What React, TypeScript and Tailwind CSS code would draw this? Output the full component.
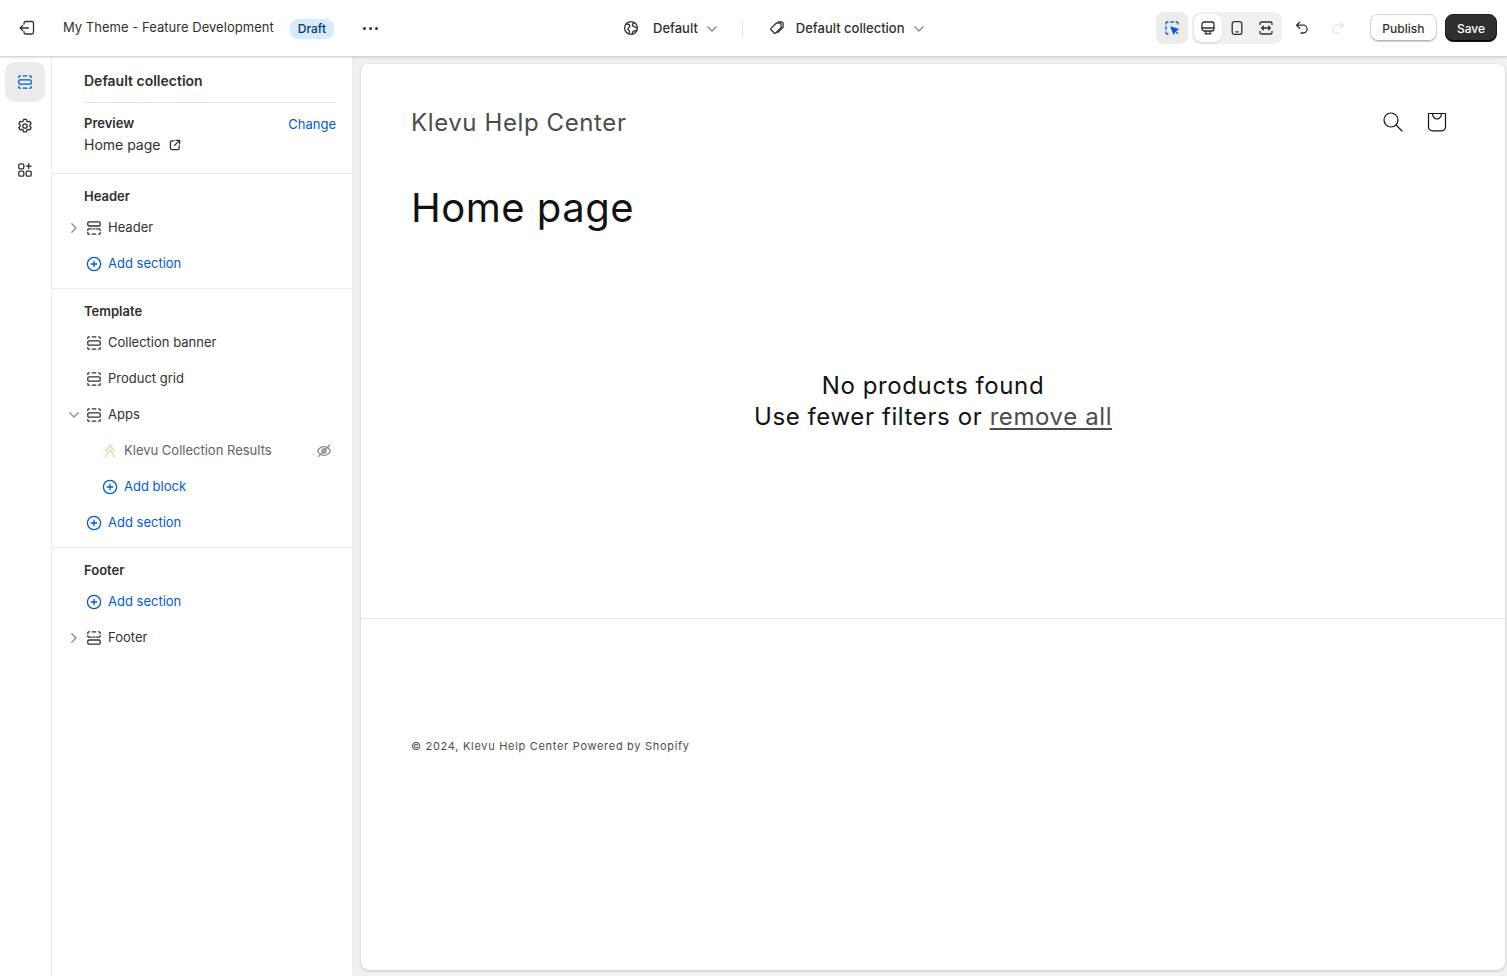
import React from "react";

type IP = { className?: string };
const S = ({ className, children, size = 16, vb = "0 0 16 16" }: IP & { children: React.ReactNode; size?: number; vb?: string }) => (
  <svg width={size} height={size} viewBox={vb} fill="none" stroke="currentColor" strokeWidth={1.3} strokeLinecap="round" strokeLinejoin="round" className={className}>
    {children}
  </svg>
);

const SectionIcon = ({ className }: IP) => (
  <S className={className}>
    <rect x="1.800" y="5.800" width="12.400" height="4.400" rx="1.200" />
    <path d="M1.800 3.400V2.800a1 1 0 0 1 1-1h.6M6.200 1.800h3.600M12.600 1.800h.6a1 1 0 0 1 1 1v.6M1.800 12.600v.6a1 1 0 0 0 1 1h.6M6.200 14.200h3.600M12.600 14.200h.6a1 1 0 0 0 1-1v-.6" />
  </S>
);
const HeaderIcon = ({ className }: IP) => (
  <S className={className}>
    <rect x="1.800" y="1.800" width="12.400" height="4.200" rx="1.200" />
    <path d="M5.400 8.800H3a1.200 1.200 0 0 0-1.200 1.200v.4M7 8.800h2M10.600 8.800H13a1.200 1.200 0 0 1 1.200 1.200v.4M1.800 12.400v.8a1 1 0 0 0 1 1h.6M6.200 14.200h3.600M12.600 14.200h.6a1 1 0 0 0 1-1v-.8" />
  </S>
);
const FooterIcon = ({ className }: IP) => (
  <S className={className}>
    <rect x="1.800" y="10" width="12.400" height="4.200" rx="1.200" />
    <path d="M5.400 7.200H3A1.200 1.200 0 0 1 1.800 6v-.4M7 7.200h2M10.600 7.200H13A1.200 1.200 0 0 0 14.200 6v-.4M1.800 3.600v-.8a1 1 0 0 1 1-1h.6M6.200 1.800h3.600M12.600 1.800h.6a1 1 0 0 1 1 1v.8" />
  </S>
);
const Plus = ({ className }: IP) => (
  <S className={className}>
    <circle cx="8" cy="8" r="6.600" />
    <path d="M8 5.200v5.600M5.200 8h5.600" />
  </S>
);
const Chevron = ({ className }: IP) => (
  <S size={12} vb="0 0 12 12" className={className}>
    <path d="M1.800 3.800 6 8l4.200-4.200" />
  </S>
);
const ChevronRight = ({ className }: IP) => (
  <S size={12} vb="0 0 12 12" className={className}>
    <path d="M3.800 1.800 8 6l-4.200 4.200" />
  </S>
);

const Add = ({ label, indent }: { label: string; indent?: boolean }) => (
  <div className={`flex h-9 items-center gap-[6px] text-[13px] font-normal text-[#005bd3] ${indent ? "pl-[50px]" : "pl-[34px]"}`}>
    <Plus className="-mt-[1px]" />
    <span>{label}</span>
  </div>
);

const Row = ({ icon, label, lead }: { icon: React.ReactNode; label: string; lead?: React.ReactNode }) => (
  <div className="flex h-9 items-center text-[13px] font-normal text-[#303030]">
    <span className="flex w-[34px] items-center justify-end pr-[6px] text-[#8a8a8a]">{lead}</span>
    <span className="text-[#303030]">{icon}</span>
    <span className="ml-[6px]">{label}</span>
  </div>
);

const Heading = ({ children }: { children: React.ReactNode }) => (
  <div className="flex h-[26px] items-center pl-[32px] text-[13px] font-semibold text-[#303030]">{children}</div>
);

const ToolButton = ({ children, active }: { children: React.ReactNode; active?: boolean }) => (
  <div className={`flex h-7 w-7 items-center justify-center rounded-lg text-[#303030] ${active ? "bg-white shadow-sm" : ""}`}>{children}</div>
);

function TopBar() {
  return (
    <header className="relative z-10 flex h-[57px] shrink-0 items-center justify-between border-b border-[#d4d4d4] bg-white shadow-[0_1px_2px_rgba(0,0,0,0.1)]">
      <div className="flex w-[390px] items-center">
        <span className="flex w-[54px] justify-center text-[#303030]">
          <S size={18} vb="0 0 18 18">
            <path d="M6 5V4.200A1.700 1.700 0 0 1 7.700 2.500h6.100a1.700 1.700 0 0 1 1.700 1.700v9.100a1.700 1.700 0 0 1-1.700 1.700H7.700A1.700 1.700 0 0 1 6 13.300v-.8M10.500 9H2.200M4.800 6.400 2.200 9l2.600 2.600" />
          </S>
        </span>
        <span className="ml-[9px] text-[13px] font-normal tracking-[0.03px] text-[#303030]">My Theme - Feature Development</span>
        <span className="ml-[16px] mt-[1px] flex h-5 items-center rounded-lg bg-[#d5ebff] px-2 text-xs font-[450] text-[#003a5a]">Draft</span>
        <span className="ml-[29px] flex items-center gap-[3px]">
          <span className="h-[3px] w-[3px] rounded-full bg-[#303030]" />
          <span className="h-[3px] w-[3px] rounded-full bg-[#303030]" />
          <span className="h-[3px] w-[3px] rounded-full bg-[#303030]" />
        </span>
      </div>
      <div className="absolute left-[623px] flex items-center pt-[1px] text-[13px] font-medium text-[#303030]">
        <S className="-mt-[1px]">
          <circle cx="8" cy="8" r="6.400" />
          <path d="M3.200 4c2 0 3.600.6 3.600 2.200 0 1.400-2 1.200-2 2.700 0 1.300 1.800 1.200 1.800 2.600 0 .8-.4 1.600-.8 2.200M11.200 2.600C10 3.400 9 4.400 9.400 5.600c.4 1.200 2 .8 2.800 1.400.8.600 1.600 1.200 2.200 1.200M9.400 13.900c-.2-1-.2-2 .8-2.600.8-.5 2 0 3-1" />
        </S>
        <span className="ml-[14px]">Default</span>
        <Chevron className="ml-2 text-[#8a8a8a]" />
        <span className="ml-[24px] h-4 w-px bg-[#e3e3e3]" />
        <S className="ml-[26px] -mt-[1px]">
          <path d="M2 8.400 7.400 3H11a1 1 0 0 1 1 1v3.600L6.600 13a1 1 0 0 1-1.400 0L2 9.800a1 1 0 0 1 0-1.400Z" />
          <path d="M9.200 1.800h2.900a2 2 0 0 1 2 2v3.400L8.700 12.600" />
        </S>
        <span className="ml-[11px]">Default collection</span>
        <Chevron className="ml-2 text-[#8a8a8a]" />
      </div>
      <div className="flex items-center pr-[10px]">
        <div className="flex h-8 w-8 items-center justify-center rounded-lg bg-[#ebebeb] text-[#005bd3]">
          <S>
            <path d="M2 4V3a1 1 0 0 1 1-1h1M7 2h2.400M12 2h1a1 1 0 0 1 1 1v1M2 6.600v2.600M2 12v1a1 1 0 0 0 1 1h1" />
            <path d="M7 7l7 2.400-3 1.200-1.200 3.200Z" fill="currentColor" />
            <path d="m10.800 10.600 2.800 2.800" />
          </S>
        </div>
        <div className="ml-[4px] flex h-8 items-center gap-[1px] rounded-lg bg-[#f1f1f1] p-[2px]">
          <ToolButton active>
            <S>
              <rect x="2" y="2" width="12" height="9" rx="2.200" />
              <path d="M2 8h12M6 11v2.800M10 11v2.800M5 13.800h6" />
            </S>
          </ToolButton>
          <ToolButton>
            <S>
              <rect x="3.200" y="1.600" width="9.600" height="12.800" rx="2.200" />
              <path d="M6.800 11.800h2.400" />
            </S>
          </ToolButton>
          <ToolButton>
            <S>
              <path d="M2 4.600V3.600A1.600 1.600 0 0 1 3.600 2h8.800A1.600 1.600 0 0 1 14 3.600v1M2 11.400v1A1.600 1.600 0 0 0 3.600 14h8.800a1.600 1.600 0 0 0 1.600-1.600v-1M3.600 8h8.800M5.400 6.200 3.600 8l1.800 1.800M10.600 6.200 12.400 8l-1.800 1.800" />
            </S>
          </ToolButton>
        </div>
        <span className="ml-[12px] text-[#303030]">
          <S>
            <path d="M5.600 2.200 2.600 5.200l3 3M2.800 5.200h6.400a3.900 3.900 0 0 1 0 7.800H7" />
          </S>
        </span>
        <span className="ml-[20px] text-[#e3e3e3]">
          <S>
            <path d="m10.400 2.200 3 3-3 3M13.200 5.200H6.800a3.900 3.900 0 0 0 0 7.800H9" />
          </S>
        </span>
        <button className="ml-[24px] flex h-7 items-center rounded-lg border border-[#d4d4d4] bg-white px-[11.5px] pt-[1px] text-xs font-medium text-[#303030] shadow-[inset_0_-1px_0_#b5b5b5]">Publish</button>
        <button className="ml-2 flex h-7 items-center rounded-lg border border-[#1a1a1a] bg-[#303030] px-[11px] pt-[1px] text-xs font-medium text-white shadow-[inset_0_-1px_0_#000]">Save</button>
      </div>
    </header>
  );
}

function Rail() {
  return (
    <nav className="flex w-[52px] shrink-0 flex-col items-start border-r border-[#ebebeb] bg-white pl-[5px] pt-[5px] text-[#303030]">
      <div className="flex h-10 w-10 items-center justify-center rounded-[10px] bg-[#ebebeb] text-[#005bd3]">
        <SectionIcon />
      </div>
      <div className="mt-[2px] flex h-[44px] w-10 items-center justify-center">
        <S>
          <circle cx="8" cy="8" r="2.200" />
          <path d="m6.600 1.400-.4 1.800-1.300.7-1.800-.5L1.800 5.500l1.300 1.300v1.500L1.800 9.700l1.300 2.100 1.800-.5 1.300.8.400 1.800h2.800l.4-1.800 1.300-.8 1.800.5 1.300-2.100-1.300-1.400V6.800l1.300-1.300-1.300-2.100-1.800.5-1.300-.7-.4-1.800Z" />
        </S>
      </div>
      <div className="flex h-[44px] w-10 items-center justify-center">
        <S>
          <rect x="1.800" y="1.800" width="5" height="5" rx="1.300" />
          <rect x="1.800" y="9.200" width="5" height="5" rx="1.300" />
          <rect x="9.200" y="9.200" width="5" height="5" rx="1.300" />
          <path d="M11.700 1.600v5M9.200 4.100h5" />
        </S>
      </div>
    </nav>
  );
}

function Panel() {
  return (
    <aside className="w-[301px] shrink-0 border-r border-[#ebebeb] bg-white">
      <div className="border-b border-[#ebebeb]">
        <div className="ml-8 mr-4 h-[46px] border-b border-[#e3e3e3]">
          <div className="flex h-[47px] items-center text-sm font-semibold text-[#303030]">Default collection</div>
        </div>
        <div className="ml-8 mr-4 flex h-[70px] justify-between pt-[10px]">
          <div>
            <div className="text-[13px] font-semibold leading-5 text-[#303030]">Preview</div>
            <div className="mt-[2px] flex items-center text-sm leading-5 text-[#303030]">
              Home page
              <S size={12} vb="0 0 12 12" className="ml-[9px] -mt-[1px]">
                <path d="M5 1.800H3A1.600 1.600 0 0 0 1.400 3.400v5.600A1.600 1.600 0 0 0 3 10.600h5.600A1.600 1.600 0 0 0 10.200 9V7M7 1.400h3.600V5M10.400 1.600 5.600 6.400" />
              </S>
            </div>
          </div>
          <div className="pt-[1px] text-[13px] font-normal leading-5 text-[#005bd3]">Change</div>
        </div>
      </div>

      <div className="border-b border-[#ebebeb] pt-[10px] pb-[6px]">
        <Heading>Header</Heading>
        <Row icon={<HeaderIcon />} label="Header" lead={<ChevronRight />} />
        <Add label="Add section" />
      </div>

      <div className="border-b border-[#ebebeb] pt-[10px] pb-[6px]">
        <Heading>Template</Heading>
        <Row icon={<SectionIcon />} label="Collection banner" />
        <Row icon={<SectionIcon />} label="Product grid" />
        <Row icon={<SectionIcon />} label="Apps" lead={<Chevron />} />
        <div className="flex h-9 items-center pl-[50px] pr-[20px] text-[13px] font-normal text-[#616161]">
          <svg width="16" height="16" viewBox="0 0 16 16" fill="none" stroke="#c3e39b" strokeWidth="1.200" strokeLinecap="round" strokeLinejoin="round">
            <path d="M3.600 8.200 8 1.800l4.400 6.400M3.200 14 8 6.600l4.800 7.400" />
          </svg>
          <span className="ml-[6px] flex-1 whitespace-nowrap">Klevu Collection Results</span>
          <S className="-mt-[1px] text-[#8a8a8a]">
            <path d="M1.600 8C3 5.200 5.200 3.700 8 3.700s5 1.500 6.400 4.300C13 10.800 10.800 12.300 8 12.300S3 10.800 1.600 8Z" />
            <circle cx="8" cy="8" r="2" />
            <path d="M13.600 2.200 2.600 13.400" />
          </S>
        </div>
        <Add label="Add block" indent />
        <Add label="Add section" />
      </div>

      <div className="pt-[10px]">
        <Heading>Footer</Heading>
        <Add label="Add section" />
        <Row icon={<FooterIcon />} label="Footer" lead={<ChevronRight />} />
      </div>
    </aside>
  );
}

function Preview() {
  return (
    <main className="flex min-w-0 flex-1 bg-[#f1f1f1] pb-[6px] pl-2 pr-[2px] pt-[7px]">
      <div className="flex flex-1 flex-col rounded-lg bg-white text-[#121212] shadow-[0_1px_3px_rgba(0,0,0,0.2)]">
        <div className="flex h-[118px] items-center justify-between pl-[50px] pr-[58px]">
          <span className="text-[24px] leading-[36px] tracking-[0.6px] text-[#4b4b4b]">Klevu Help Center</span>
          <span className="-mt-[2px] flex items-center gap-6 text-[#121212]">
            <svg width="20" height="20" viewBox="0 0 20 20" fill="none" stroke="currentColor" strokeWidth="1.200" strokeLinecap="round">
              <circle cx="8" cy="8" r="7" />
              <path d="m13 13 6 6" />
            </svg>
            <svg width="20" height="20" viewBox="0 0 20 20" fill="none" stroke="currentColor" strokeWidth="1.200" strokeLinejoin="round">
              <path d="M1.500 1.500h17v13.500a3.800 3.800 0 0 1-3.800 3.800H5.300a3.800 3.800 0 0 1-3.800-3.800Z" />
              <path d="M5.500 1.500c0 3 2 5.500 4.500 5.500s4.500-2.500 4.500-5.500" />
            </svg>
          </span>
        </div>
        <h1 className="pl-[50px] text-[40px] leading-[52px] tracking-[0.5px]">Home page</h1>
        <div className="mt-[136px] flex flex-col items-center text-[24px] leading-[31px] tracking-[0.6px]">
          <div>No products found</div>
          <div>
            Use fewer filters or <span className="text-[#4b4b4b] underline underline-offset-[3px]">remove all</span>
          </div>
        </div>
        <div className="mt-[186px] border-t border-[#e7e7e7] pl-[50px] pt-[119px] text-[11px] leading-4 tracking-[0.7px] text-[#4b4b4b]">
          © 2024, Klevu Help Center Powered by Shopify
        </div>
      </div>
    </main>
  );
}

export default function App() {
  return (
    <div className="flex h-[976px] flex-col overflow-hidden bg-white font-['Inter',sans-serif]">
      <TopBar />
      <div className="flex min-h-0 flex-1">
        <Rail />
        <Panel />
        <Preview />
      </div>
    </div>
  );
}
